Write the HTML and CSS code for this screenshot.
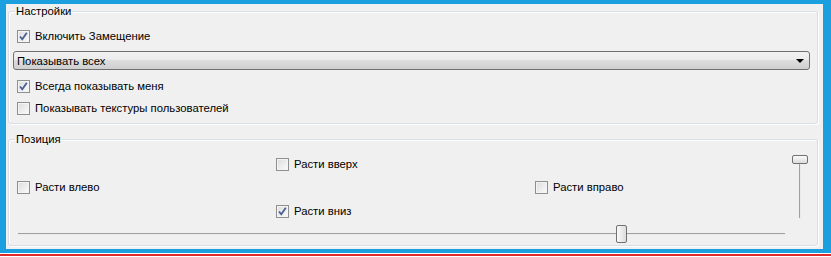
FILE: index.html
```html
<!DOCTYPE html>
<html lang="ru">
<head>
  <meta charset="UTF-8">
  <title>Настройки</title>
  <link rel="stylesheet" href="styles.css">
</head>
<body>
  <div class="frame">
    <fieldset class="group settings">
      <legend>Настройки</legend>
      <label class="check"><span class="box checked"></span>Включить Замещение</label>
      <div class="combo">
        <span>Показывать всех</span>
        <span class="arrow"></span>
      </div>
      <label class="check"><span class="box checked"></span>Всегда показывать меня</label>
      <label class="check"><span class="box"></span>Показывать текстуры пользователей</label>
    </fieldset>

    <fieldset class="group position">
      <legend>Позиция</legend>
      <div class="grid">
        <label class="check up"><span class="box"></span>Расти вверх</label>
        <label class="check left"><span class="box"></span>Расти влево</label>
        <label class="check right"><span class="box"></span>Расти вправо</label>
        <label class="check down"><span class="box checked"></span>Расти вниз</label>
        <div class="vslider">
          <div class="vtrack"></div>
          <div class="vthumb"></div>
        </div>
        <div class="hslider">
          <div class="htrack"></div>
          <div class="hthumb" style="left: 78%"></div>
        </div>
      </div>
    </fieldset>
  </div>
  <div class="redline"></div>
</body>
</html>
```

FILE: styles.css
```css
body {
  margin: 0;
  background: #fff;
  font-family: "Liberation Sans", Arial, sans-serif;
  font-size: 11.3px;
  color: #000;
}
.frame {
  box-sizing: border-box;
  width: 831px;
  height: 253px;
  border-style: solid;
  border-color: #1b9fdf;
  border-width: 4px 8px 4px 6px;
  background: #f0f0f0;
  padding: 0 5px 0 2px;
}
.redline {
  margin-top: 1px;
  height: 2px;
  background: #e02a2a;
}
.group {
  margin: 0;
  padding: 0 0 0 8px;
  border: 1px solid #d5dfe5;
  border-radius: 3px;
  box-shadow: inset 1px 1px 0 #fff, 1px 1px 0 #fff;
}
.group legend {
  padding: 0 1px;
  margin-left: -2px;
  line-height: 14px;
}
.settings {
  height: 120px;
  box-sizing: border-box;
  display: flex;
  flex-direction: column;
  padding-top: 7px;
}
.check {
  display: flex;
  align-items: center;
  height: 22px;
  white-space: nowrap;
}
.box {
  box-sizing: border-box;
  width: 13px;
  height: 13px;
  margin-right: 5px;
  border: 1px solid #8e8f8f;
  background: linear-gradient(135deg, #dcdcdc, #fbfbfb);
  box-shadow: inset 0 0 0 1px #f4f4f4;
  flex: none;
}
.box.checked {
  background:
    url("data:image/svg+xml,%3Csvg xmlns='http://www.w3.org/2000/svg' width='11' height='11'%3E%3Cpath d='M2 5.5 L4.3 8.3 L8.8 1.8' fill='none' stroke='%234a5f97' stroke-width='1.8'/%3E%3C/svg%3E") center / 11px 11px no-repeat,
    linear-gradient(135deg, #dcdcdc, #fbfbfb);
}
.combo {
  box-sizing: border-box;
  display: flex;
  align-items: center;
  justify-content: space-between;
  height: 19px;
  margin: 4px 0 5px -4px;
  width: 797px;
  padding: 0 5px 0 3px;
  border: 1px solid #707070;
  border-radius: 3px;
  background: linear-gradient(#f2f2f2 0%, #ebebeb 45%, #dddddd 50%, #cfcfcf 100%);
}
.arrow {
  width: 0;
  height: 0;
  border-left: 4px solid transparent;
  border-right: 4px solid transparent;
  border-top: 4px solid #000;
}
.position {
  margin-top: 8px;
  height: 114px;
  box-sizing: border-box;
  padding-top: 7px;
}
.grid {
  display: grid;
  grid-template-columns: 259px 259px 1fr 30px;
  grid-template-rows: 23px 24px 24px 22px;
}
.up { grid-column: 2; grid-row: 1; }
.left { grid-column: 1; grid-row: 2; }
.right { grid-column: 3; grid-row: 2; }
.down { grid-column: 2; grid-row: 3; }
.vslider {
  grid-column: 4;
  grid-row: 1 / 4;
  position: relative;
  margin-top: 2px;
}
.vtrack {
  position: absolute;
  left: 12px;
  top: 6px;
  width: 1px;
  height: 57px;
  background: #a0a0a0;
  box-shadow: 1px 0 0 #e7eaea;
}
.vthumb {
  position: absolute;
  left: 5px;
  top: 0;
  box-sizing: border-box;
  width: 16px;
  height: 9px;
  border: 1px solid #707070;
  border-radius: 2px;
  background: linear-gradient(#fafafa, #dcdcdc);
}
.hslider {
  grid-column: 1 / 4;
  grid-row: 4;
  position: relative;
  margin-right: 2px;
}
.htrack {
  position: absolute;
  left: 1px;
  right: 0;
  top: 9px;
  height: 1px;
  background: #a0a0a0;
  box-shadow: 0 1px 0 #e7eaea;
}
.hthumb {
  position: absolute;
  top: 1px;
  box-sizing: border-box;
  width: 11px;
  height: 18px;
  border: 1px solid #707070;
  border-radius: 2px;
  background: linear-gradient(90deg, #fafafa, #dcdcdc);
}
```
